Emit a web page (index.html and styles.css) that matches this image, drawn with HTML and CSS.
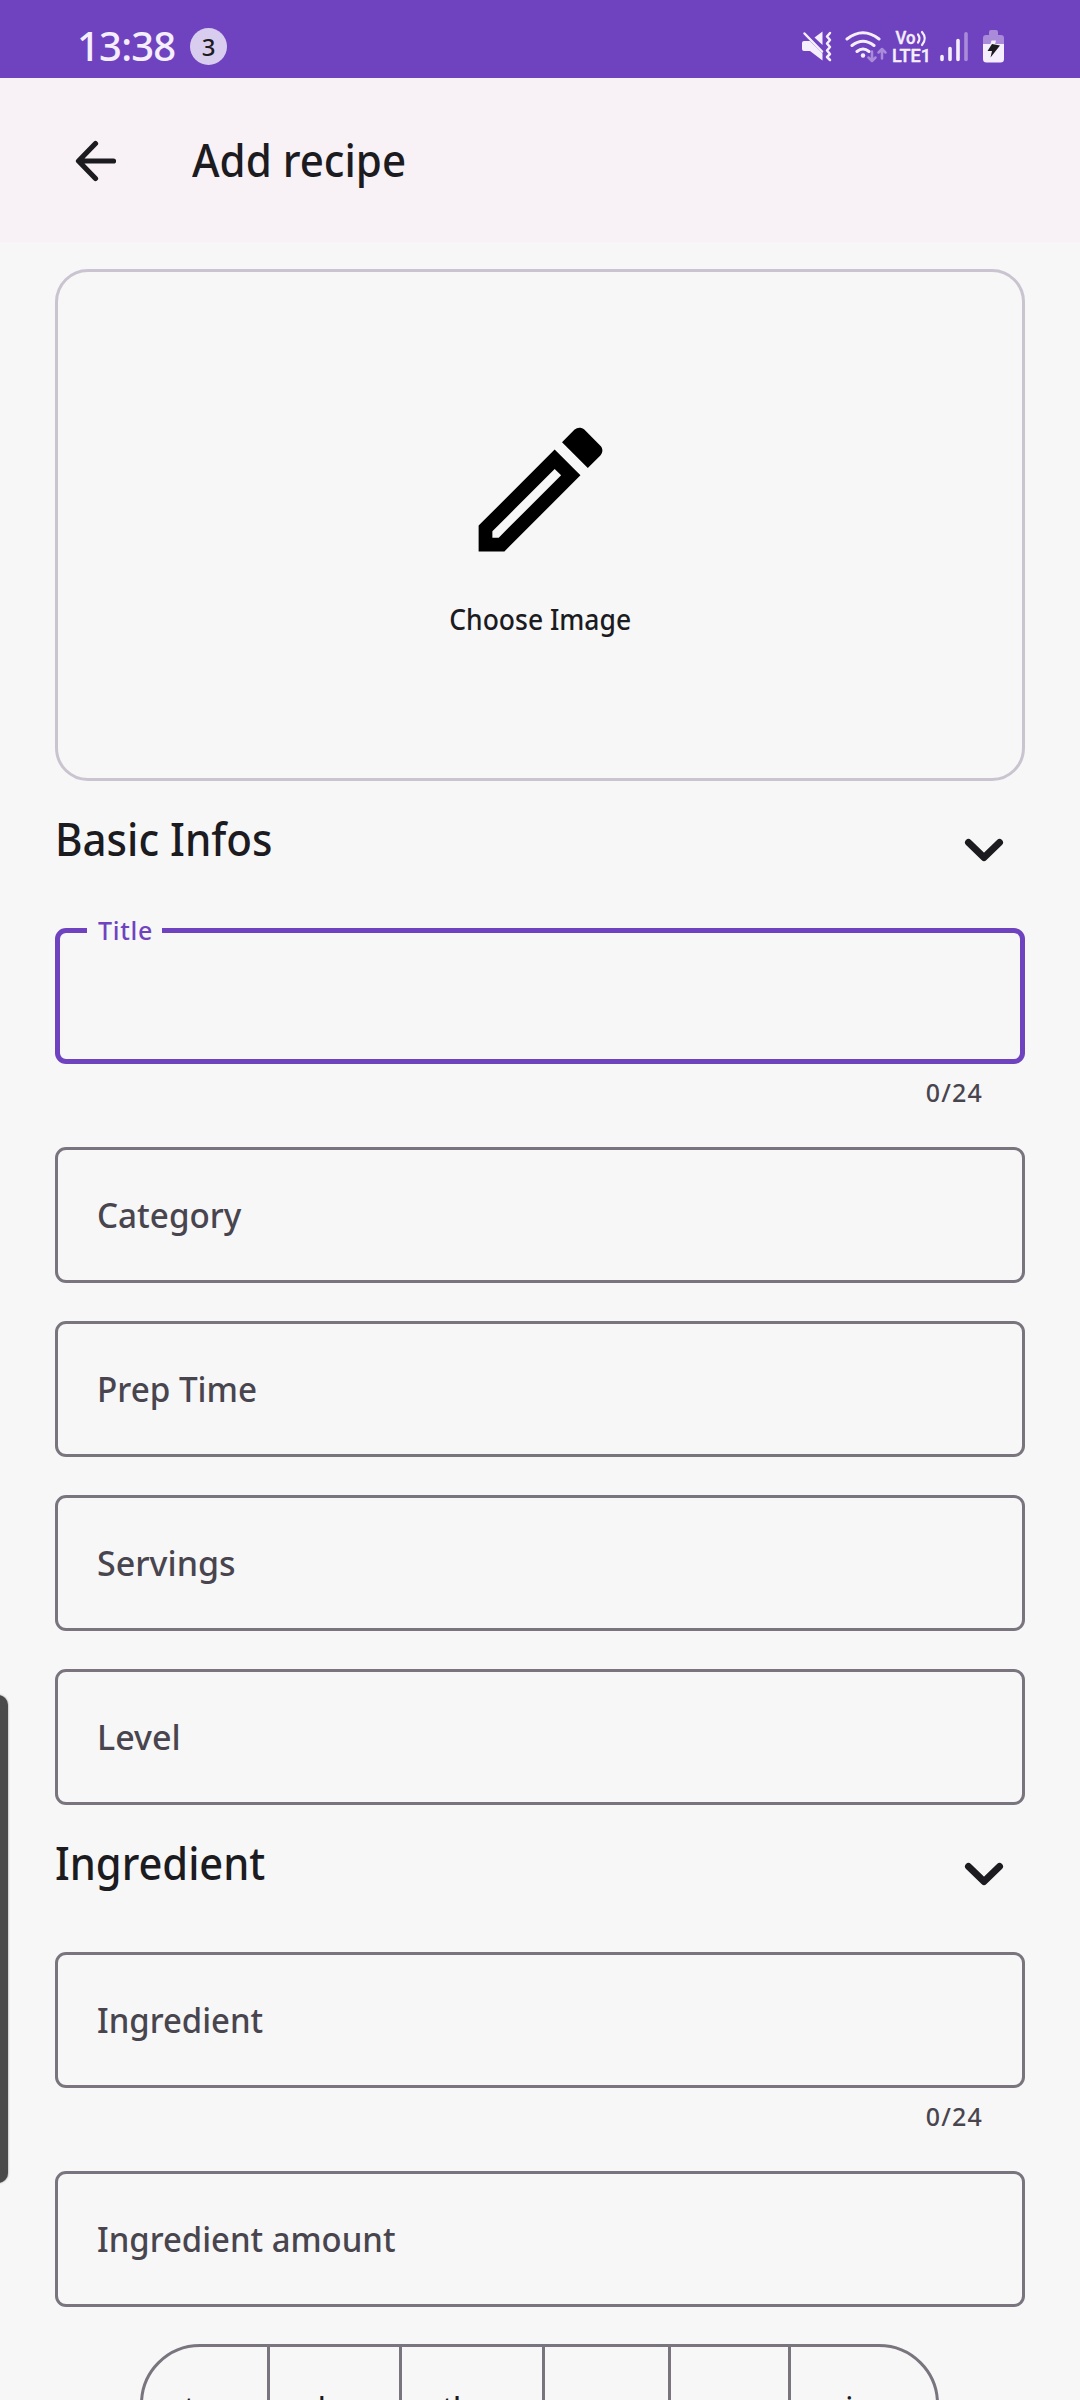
FILE: index.html
```html
<!DOCTYPE html>
<html lang="en">
<head>
<meta charset="utf-8">
<title>Add recipe</title>
<link rel="stylesheet" href="styles.css">
</head>
<body>
<header class="status">
  <span class="clock">13:38</span>
  <span class="count">3</span>
  <svg class="status-icons" width="210" height="36" viewBox="800 28 210 36" fill="none" stroke="#f5effd" stroke-linecap="round" stroke-linejoin="round">
    <path d="M804 41h6L822.500 53.500V60.500L810 51H804q-2 0-2-2v-6q0-2 2-2zM814.500 37.500l8-6v13.500z" fill="#f5effd" stroke="none"/>
    <path d="M804.500 33.500L822 51.500" stroke-width="2.500"/>
    <path d="M830 33l-3 3.500 3 3.500-3 3.500 3 3.500-3 3.500 3 3.500-3 3 3 3" stroke-width="2.500"/>
    <path d="M847 39q16-12.500 32 0M852 45.500q11-8.500 22 0M857 51.500q6-5 12 0" stroke-width="3"/>
    <circle cx="863" cy="55.500" r="2.200" fill="#f5effd" stroke="none"/>
    <path d="M872 51.500v9M868.500 57.500l3.500 3.500 3.500-3.500M882 58.500v-9M878.500 52.500l3.500-3.500 3.500 3.500" stroke="#a98bda" stroke-width="2.500"/>
    <text class="net" x="895.500" y="44" textLength="20" lengthAdjust="spacingAndGlyphs">Vo</text>
    <path d="M918 34.500q3 4 0 8M922 32q5.500 6.500 0 13" stroke-width="2.200"/>
    <text class="net" x="892" y="61.500" textLength="39" lengthAdjust="spacingAndGlyphs">LTE1</text>
    <path d="M942 56.500v3M950 48.500v11M958 40.500v19" stroke-width="3.600"/>
    <path d="M966 33.800v25.700" stroke="#a98bda" stroke-width="3.600"/>
    <path d="M989 32q0-2 2-2h5q2 0 2 2v3h3q3 0 3 3v7h-21v-7q0-3 3-3h3z" fill="#a98bda" stroke="none"/>
    <path d="M983 44h21v15q0 3.500-3.500 3.500h-14q-3.500 0-3.500-3.500z" fill="#f5effd" stroke="none"/>
    <path d="M991.500 40.500h4.500l-1 4-5 1z" fill="#f5effd" stroke="none"/>
    <path d="M992 44l8 1.500-9.500 12 1.500-6.500h-4.500z" fill="#1c1b1f" stroke="none"/>
  </svg>
</header>

<nav class="appbar">
  <svg class="back" width="42" height="42" viewBox="0 0 42 42" fill="none" stroke="#1c1b1f" stroke-width="5.200" stroke-linecap="round" stroke-linejoin="round"><path d="M38.500 21H4M20.500 3.500L3.500 21l17 17.500"/></svg>
  <h1 class="heading"><span class="fit fit-title">Add recipe</span></h1>
</nav>

<main class="form">
  <button class="picker">
    <svg width="165" height="165" viewBox="0 0 24 24"><path d="M14.060 9L15 9.940L5.920 19H5V18.080L14.060 9M17.660 3C17.410 3 17.150 3.100 16.960 3.290L15.130 5.120L18.880 8.870L20.710 7.040C21.100 6.650 21.100 6 20.710 5.630L18.370 3.290C18.170 3.090 17.920 3 17.660 3M14.060 6.190L3 17.250V21H6.750L17.810 9.940L14.060 6.190Z"/></svg>
    <span class="fit fit-picker">Choose Image</span>
  </button>

  <section class="section">
    <div class="section-head">
      <h2 class="heading"><span class="fit fit-basic">Basic Infos</span></h2>
      <svg class="chevron" width="40" height="24" viewBox="0 0 40 24"><path d="M4.500 4.500L20 19.500 35.500 4.500"/></svg>
    </div>
    <div class="field focused"><span class="float-label">Title</span></div>
    <div class="counter">0/24</div>
    <div class="fields">
      <div class="field"><span class="fit fit-label">Category</span></div>
      <div class="field"><span class="fit fit-label">Prep Time</span></div>
      <div class="field"><span>Servings</span></div>
      <div class="field"><span>Level</span></div>
    </div>
  </section>

  <section class="section">
    <div class="section-head">
      <h2 class="heading"><span class="fit fit-ingredient">Ingredient</span></h2>
      <svg class="chevron" width="40" height="24" viewBox="0 0 40 24"><path d="M4.500 4.500L20 19.500 35.500 4.500"/></svg>
    </div>
    <div class="field"><span class="fit fit-label-long">Ingredient</span></div>
    <div class="counter">0/24</div>
    <div class="fields">
      <div class="field"><span class="fit fit-label-long">Ingredient amount</span></div>
    </div>
    <div class="units">
      <span>tsp</span><span>kg</span><span>tbsp</span><span>g</span><span>oz</span><span>piece</span>
    </div>
  </section>
</main>
<div class="edge-handle"></div>
</body>
</html>
```
FILE: styles.css
```css
* { box-sizing: border-box; }
body {
  margin: 0;
  height: 2400px;
  overflow: hidden;
  position: relative;
  background: #f7f7f7;
  color: #1c1b1f;
  font-family: "Noto Sans", "Open Sans", sans-serif;
  font-weight: 500;
}
.status {
  display: flex;
  align-items: center;
  height: 78px;
  padding: 14px 70px 0 77px;
  background: #6f43bf;
  color: #f5effd;
}
.clock { width: 113px; font: 500 40px/40px "Noto Sans", sans-serif; letter-spacing: -.8px; }
.count {
  width: 37px;
  height: 37px;
  border-radius: 50%;
  background: #d9cdef;
  color: #1c1b1f;
  font-size: 24px;
  line-height: 37px;
  text-align: center;
}
.status-icons { margin-left: auto; }
.net { font: 500 18px Roboto, sans-serif; fill: #f5effd; stroke: #f5effd; stroke-width: .4px; }
.appbar {
  display: flex;
  align-items: center;
  gap: 75px;
  height: 164px;
  padding: 0 75px;
  background: #f8f1f6;
}
.heading { margin: 0; font-size: 46px; line-height: 60px; font-weight: 540; white-space: nowrap; }
.back { margin-top: 1px; }
.appbar .heading { margin-top: -2px; }
.fit { display: inline-block; transform-origin: 0 50%; }
.fit-title { transform: scaleX(.915); }
.fit-basic { transform: scaleX(.915); }
.fit-ingredient { transform: scaleX(.905); }
.fit-picker { transform: scaleX(.945); }
.fit-label { transform: scaleX(.977); }
.fit-label-long { transform: scaleX(.967); }
.form { padding: 27px 55px 0; }
.picker {
  display: flex;
  flex-direction: column;
  align-items: center;
  width: 100%;
  height: 512px;
  padding: 135px 0 0;
  border: 3px solid #cac4d0;
  border-radius: 33px;
  background: none;
  color: inherit;
  font: 500 28px/40px "Noto Sans", sans-serif;
}
.picker .fit { margin-top: 27px; transform-origin: 50% 50%; }
.section-head {
  display: flex;
  justify-content: space-between;
  height: 147px;
  padding: 27px 21px 0 0;
}
.chevron { margin-top: 30px; fill: none; stroke: #1c1b1f; stroke-width: 7; stroke-linecap: round; stroke-linejoin: round; }
.field {
  display: flex;
  align-items: center;
  height: 136px;
  padding: 0 39px;
  border: 3px solid #79747e;
  border-radius: 11px;
  color: #49454f;
  font-size: 34px;
  line-height: 46px;
}
.focused { position: relative; border: 5px solid #6f43bf; }
.float-label {
  position: absolute;
  left: 27px;
  top: -21px;
  width: 75px;
  padding-left: 11px;
  background: #f7f7f7;
  color: #6f43bf;
  font-size: 25px;
  line-height: 36px;
  letter-spacing: .7px;
}
.counter {
  height: 83px;
  padding: 10px 42px 0 0;
  color: #49454f;
  font-size: 25px;
  line-height: 36px;
  letter-spacing: 1.2px;
  text-align: right;
}
.fields { display: grid; gap: 38px; }
.units {
  display: grid;
  grid-template-columns: 124px 132px 143px 126px 120px 148px;
  width: 799px;
  height: 132px;
  margin: 37px 0 0 85px;
  border: 3px solid #79747e;
  border-radius: 60px;
  font-size: 28px;
  line-height: 121px;
  text-align: center;
}
.units span + span { border-left: 3px solid #79747e; }
.edge-handle {
  position: absolute;
  left: -12px;
  top: 1695px;
  width: 20px;
  height: 488px;
  border-radius: 10px;
  background: #4a4a4a;
  box-shadow: 0 0 2px #777;
}
```
